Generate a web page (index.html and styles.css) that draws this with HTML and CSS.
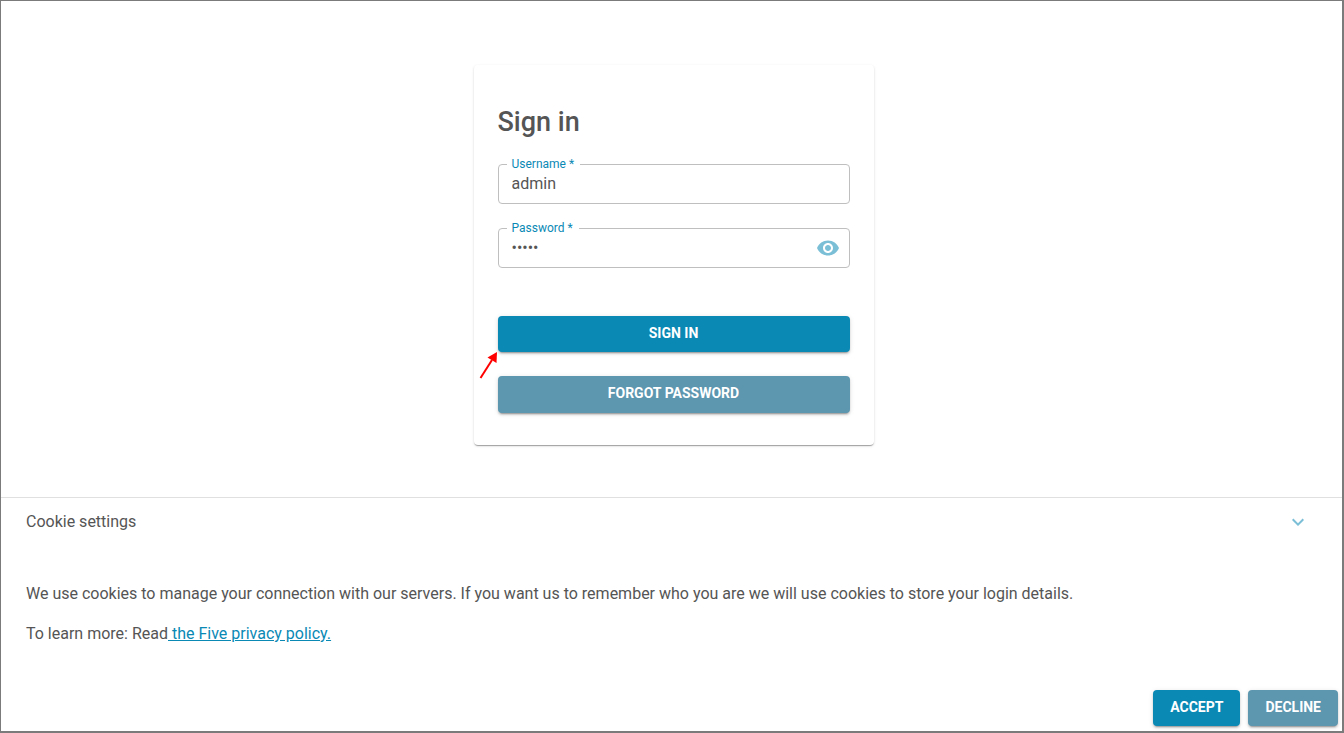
FILE: index.html
```html
<!DOCTYPE html>
<html lang="en">
<head>
<meta charset="utf-8">
<title>Sign in</title>
<link rel="stylesheet" href="styles.css">
</head>
<body>
<div class="page">
  <main class="main">
    <form class="card">
      <h1 class="title">Sign in</h1>
      <div class="field">
        <label class="label" for="username">Username *</label>
        <input class="input" id="username" type="text" value="admin">
      </div>
      <div class="field">
        <label class="label" for="password">Password *</label>
        <input class="input" id="password" type="password" value="admin">
        <button class="icon-button" type="button" aria-label="Show password">
          <svg width="24" height="24" viewBox="0 0 24 24" fill="currentColor"><path d="M12 4.500C7 4.500 2.730 7.610 1 12c1.730 4.390 6 7.500 11 7.500s9.270-3.110 11-7.500c-1.730-4.390-6-7.500-11-7.500zM12 17c-2.760 0-5-2.240-5-5s2.240-5 5-5 5 2.240 5 5-2.240 5-5 5zm0-8c-1.660 0-3 1.340-3 3s1.340 3 3 3 3-1.340 3-3-1.340-3-3-3z"/></svg>
        </button>
      </div>
      <div class="actions">
        <button class="button primary" type="button">SIGN IN</button>
        <button class="button secondary" type="button">FORGOT PASSWORD</button>
        <svg class="pointer" width="20" height="28" viewBox="0 0 20 28" aria-hidden="true"><path d="M1.500 27L13 9" stroke="#f00" stroke-width="2"/><path d="M18 1L17.500 12L8.500 6.500z" fill="#f00"/></svg>
      </div>
    </form>
  </main>
  <section class="cookies">
    <header class="cookies-head">
      <h2 class="cookies-title">Cookie settings</h2>
      <button class="icon-button" type="button" aria-label="Collapse">
        <svg width="24" height="24" viewBox="0 0 24 24" fill="currentColor"><path d="M7.410 8.590L12 13.170l4.590-4.580L18 10l-6 6-6-6z"/></svg>
      </button>
    </header>
    <div class="cookies-text">
      <p>We use cookies to manage your connection with our servers. If you want us to remember who you are we will use cookies to store your login details.</p>
      <p>To learn more: Read<a class="link" href="#"> the Five privacy policy.</a></p>
    </div>
    <div class="cookies-actions">
      <button class="button primary" type="button">ACCEPT</button>
      <button class="button secondary" type="button">DECLINE</button>
    </div>
  </section>
</div>
</body>
</html>
```
FILE: styles.css
```css
* {
  box-sizing: border-box;
}

body {
  margin: 0;
  background: #fff;
  color: #555;
  font: 16px/24px Roboto, "Liberation Sans", sans-serif;
}

.page {
  min-height: 100vh;
  display: flex;
  flex-direction: column;
  border: 1px solid #7b7b7b;
  border-width: 1px 2px 2px 1px;
}

.main {
  flex: 1;
  display: flex;
  justify-content: center;
  align-items: flex-start;
  padding: 64px 0 48px 4px;
}

.card {
  width: 400px;
  padding: 41px 24px 32px;
  border-radius: 4px;
  box-shadow: 0 2px 1px -1px rgba(0, 0, 0, .2), 0 1px 1px rgba(0, 0, 0, .14), 0 1px 3px rgba(0, 0, 0, .12);
}

.title {
  margin: 0 0 26px;
  font-size: 27px;
  line-height: 32px;
  font-weight: 500;
}

.field {
  position: relative;
  display: flex;
  align-items: center;
  height: 40px;
  margin-bottom: 24px;
  padding-right: 9px;
  border: 1px solid #bfbfbf;
  border-radius: 4px;
}

.label {
  position: absolute;
  top: -9px;
  left: 8px;
  padding: 0 6px 0 5px;
  background: #fff;
  color: #0a89b5;
  font-size: 12px;
  line-height: 16px;
}

.input {
  flex: 1;
  min-width: 0;
  height: 38px;
  padding: 0 13px 2px;
  border: 0;
  outline: 0;
  background: none;
  color: inherit;
  font: inherit;
}

.icon-button {
  display: flex;
  padding: 0;
  border: 0;
  background: none;
  color: #7bbfd7;
}

.actions {
  position: relative;
  display: flex;
  flex-direction: column;
  gap: 24px;
  margin-top: 48px;
}

.actions .secondary {
  min-height: 37px;
  padding-bottom: 3px;
}

.pointer {
  position: absolute;
  top: 35px;
  left: -19px;
}

.button {
  min-height: 36px;
  padding: 0 17px 2px;
  border: 0;
  border-radius: 4px;
  color: #fff;
  font: 700 14px/24px Roboto, "Liberation Sans", sans-serif;
  box-shadow: 0 3px 1px -2px rgba(0, 0, 0, .2), 0 2px 2px rgba(0, 0, 0, .14), 0 1px 5px rgba(0, 0, 0, .12);
}

.primary {
  background: #0a89b5;
}

.secondary {
  background: #5c96af;
}

.cookies {
  border-top: 1px solid #e0e0e0;
}

.cookies-head {
  display: flex;
  justify-content: space-between;
  align-items: center;
  height: 48px;
  padding: 0 32px 0 25px;
}

.cookies-title {
  margin: 0;
  font-size: 16px;
  font-weight: 400;
}

.cookies-text {
  padding: 36px 25px 0;
}

.cookies-text p {
  margin: 0 0 16px;
}

.link {
  color: #0a89b5;
}

.cookies-actions {
  display: flex;
  justify-content: flex-end;
  gap: 8px;
  padding: 28px 4px 5px;
}
```
